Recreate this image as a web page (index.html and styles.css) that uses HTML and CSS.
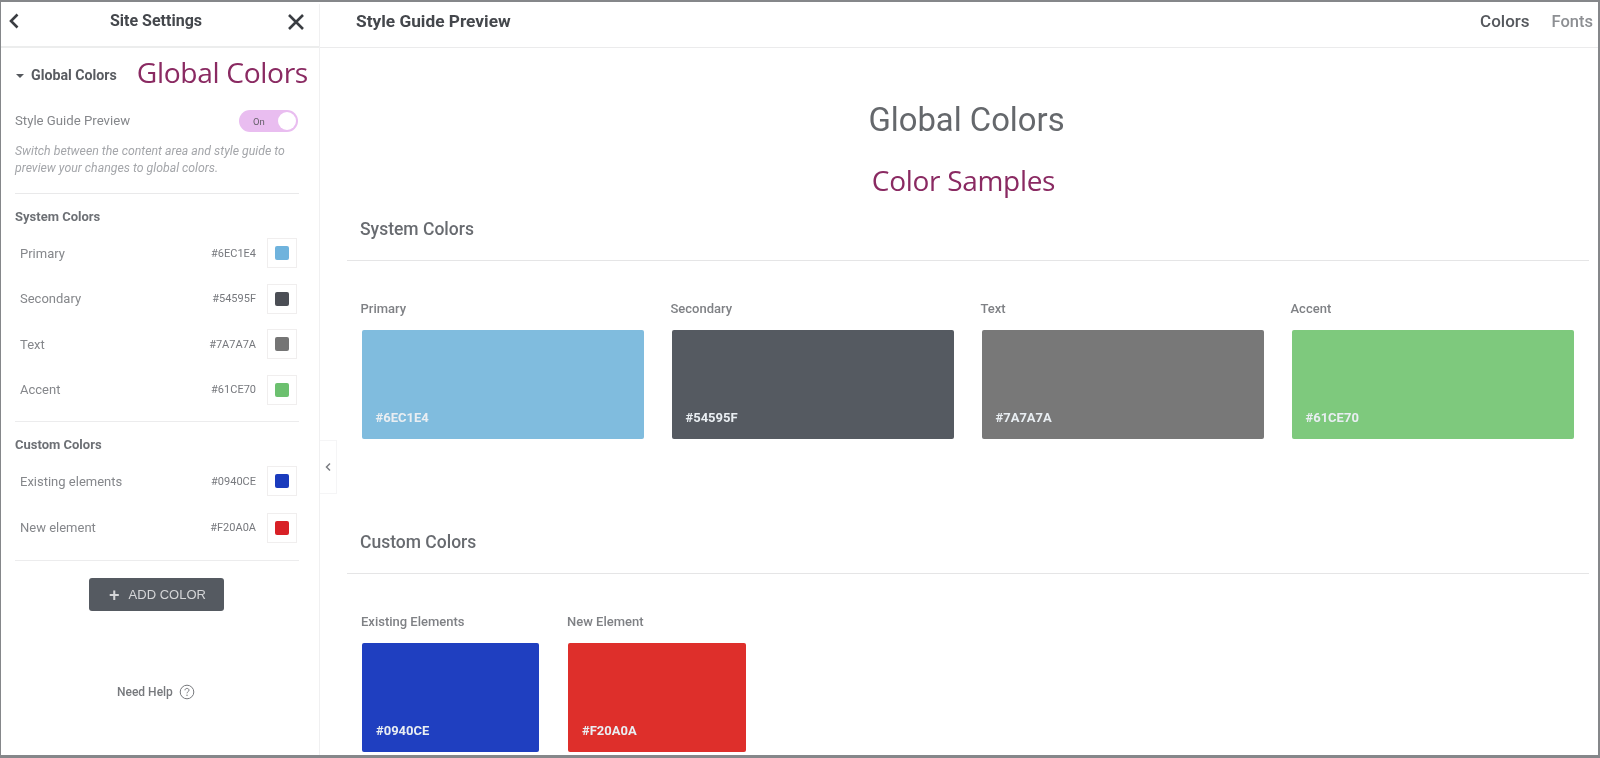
FILE: index.html
```html
<!DOCTYPE html>
<html lang="en">
<head>
<meta charset="utf-8">
<title>Site Settings - Global Colors</title>
<link rel="stylesheet" href="styles.css">
</head>
<body>
<div class="frame">
  <aside class="sidebar">
    <header class="side-head">
      <svg class="head-icon back-icon" viewBox="0 0 14 18" width="14" height="18"><path d="M10.5 2.5 4 9l6.500 6.500" fill="none" stroke="#3a3d42" stroke-width="2.600"/></svg>
      <span class="side-title">Site Settings</span>
      <svg class="head-icon" viewBox="0 0 18 18" width="18" height="18"><path d="M2 2l14 14M16 2 2 16" fill="none" stroke="#3a3d42" stroke-width="2.600"/></svg>
    </header>
    <div class="side-body">
      <div class="section-title">
        <span class="caret"></span>
        <span class="section-name">Global Colors</span>
        <span class="note note-side">Global Colors</span>
      </div>
      <div class="preview-row">
        <span class="preview-label">Style Guide Preview</span>
        <span class="toggle"><span class="toggle-text">On</span><span class="knob"></span></span>
      </div>
      <p class="hint">Switch between the content area and style guide to preview your changes to global colors.</p>
      <div class="group group-system">
        <h3 class="group-title">System Colors</h3>
        <div class="color-row"><span class="color-name">Primary</span><span class="hex">#6EC1E4</span><span class="chip"><i class="dot c-primary"></i></span></div>
        <div class="color-row"><span class="color-name">Secondary</span><span class="hex">#54595F</span><span class="chip"><i class="dot c-secondary"></i></span></div>
        <div class="color-row"><span class="color-name">Text</span><span class="hex">#7A7A7A</span><span class="chip"><i class="dot c-text"></i></span></div>
        <div class="color-row"><span class="color-name">Accent</span><span class="hex">#61CE70</span><span class="chip"><i class="dot c-accent"></i></span></div>
      </div>
      <div class="group group-custom">
        <h3 class="group-title">Custom Colors</h3>
        <div class="color-row"><span class="color-name">Existing elements</span><span class="hex">#0940CE</span><span class="chip"><i class="dot c-blue"></i></span></div>
        <div class="color-row"><span class="color-name">New element</span><span class="hex">#F20A0A</span><span class="chip"><i class="dot c-red"></i></span></div>
      </div>
      <div class="add-wrap"><button class="add-btn"><span class="plus">+</span>ADD COLOR</button></div>
      <div class="help">Need Help
        <svg viewBox="0 0 16 16" width="16" height="16"><circle cx="8" cy="8" r="6.800" fill="none" stroke="#77797d" stroke-width="1"/><path d="M6 6.300c0-1.200.9-1.900 2-1.900s2 .7 2 1.800c0 1.500-2 1.500-2 3.100" fill="none" stroke="#77797d" stroke-width="1"/><circle cx="8" cy="11.300" r=".7" fill="#77797d"/></svg>
      </div>
    </div>
    <div class="collapse">
      <svg viewBox="0 0 8 10" width="8" height="10"><path d="M6 1.500 2.500 5 6 8.500" fill="none" stroke="#7b7d82" stroke-width="1.500"/></svg>
    </div>
  </aside>
  <main class="main">
    <header class="main-head">
      <span class="main-title">Style Guide Preview</span>
      <nav class="tabs"><span class="tab tab-on">Colors</span><span class="tab">Fonts</span></nav>
    </header>
    <div class="main-body">
      <h1 class="page-title">Global Colors</h1>
      <div class="note note-main">Color Samples</div>
      <section class="panel panel-system">
        <h2 class="panel-title">System Colors</h2>
        <div class="swatches">
          <div class="swatch-col"><div class="swatch-label">Primary</div><div class="swatch c-primary-lg">#6EC1E4</div></div>
          <div class="swatch-col"><div class="swatch-label">Secondary</div><div class="swatch c-secondary-lg">#54595F</div></div>
          <div class="swatch-col"><div class="swatch-label">Text</div><div class="swatch c-text-lg">#7A7A7A</div></div>
          <div class="swatch-col"><div class="swatch-label">Accent</div><div class="swatch c-accent-lg">#61CE70</div></div>
        </div>
      </section>
      <section class="panel panel-custom">
        <h2 class="panel-title">Custom Colors</h2>
        <div class="swatches swatches-custom">
          <div class="swatch-col"><div class="swatch-label">Existing Elements</div><div class="swatch c-blue-lg">#0940CE</div></div>
          <div class="swatch-col"><div class="swatch-label">New Element</div><div class="swatch c-red-lg">#F20A0A</div></div>
        </div>
      </section>
    </div>
  </main>
</div>
</body>
</html>
```
FILE: styles.css
```css
* { box-sizing: border-box; }
html, body { margin: 0; height: 100%; background: #fff; overflow: hidden; }
body { font-family: Roboto, "Liberation Sans", sans-serif; color: #6d7075; }
.frame {
  width: 1600px; height: 758px;
  padding-top: 2px;
  border: solid #85878a;
  border-width: 2px 2px 3px 1px;
  display: flex;
  overflow: hidden;
  filter: blur(.6px);
}
.sidebar { width: 319px; flex: none; border-right: 1px solid #f0f0f1; position: relative; display: flex; flex-direction: column; }
.side-head { height: 44px; flex: none; border-bottom: 2px solid #eceded; display: flex; align-items: center; justify-content: space-between; padding: 0 14px 6px 6px; }
.back-icon { margin-top: -3px; }
.side-title { font-size: 16px; font-weight: 700; color: #44474c; margin-left: 4px; margin-top: -3px; }
.side-body { padding: 0 21px 0 14px; flex: 1; }
.section-title { display: flex; align-items: center; height: 48px; margin-top: 3px; }
.caret { width: 0; height: 0; border: solid transparent; border-width: 4px 4px 0; border-top-color: #55585d; margin: 1px 7px 0 1px; }
.section-name { font-size: 14.200px; font-weight: 700; color: #595c61; white-space: nowrap; }
.note { font-family: "Open Sans", "Noto Sans", sans-serif; color: #8a2a62; }
.note-side { font-size: 28.200px; line-height: 1; margin-left: 20px; margin-top: -5px; letter-spacing: -.35px; white-space: nowrap; }
.preview-row { display: flex; justify-content: space-between; align-items: center; height: 22px; margin-top: 10.500px; }
.preview-label { font-size: 13.200px; color: #85878b; }
.toggle { width: 59px; height: 22px; border-radius: 11px; background: #e9bdf0; display: flex; align-items: center; justify-content: space-between; padding-left: 14px; padding-right: 2px; margin-top: 1px; }
.toggle-text { font-size: 9.500px; color: #66606a; }
.knob { width: 18px; height: 18px; border-radius: 50%; background: #fff; }
.hint { margin: 11.500px 0 0; font-size: 12.300px; line-height: 17.300px; font-style: italic; color: #a4a6aa; height: 51px; border-bottom: 1px solid #e9e9ea; width: 284px; }
.group { width: 284px; }
.group-title { margin: 15px 0 13px; font-size: 13px; line-height: 16px; font-weight: 700; color: #6d7075; }
.color-row { display: flex; align-items: center; height: 30px; margin-bottom: 15.500px; padding: 0 2px 0 5px; }
.group-system { padding-bottom: 1px; }
.color-name { flex: 1; font-size: 13px; color: #85878b; }
.hex { font-size: 11px; color: #77797e; margin-right: 11px; }
.chip { width: 30px; height: 30px; border: 1px solid #f0eeee; display: flex; align-items: center; justify-content: center; }
.dot { display: block; width: 14px; height: 14px; border-radius: 2px; }
.c-primary { background: #6fb3dd; }
.c-secondary { background: #4b4e55; }
.c-text { background: #757575; }
.c-accent { background: #6cc06f; }
.c-blue { background: #1a3bbd; }
.c-red { background: #d82026; }
.group-custom { border-top: 1px solid #ececed; border-bottom: 1px solid #ececed; padding-bottom: 1px; }
.group-custom .group-title { margin-top: 15px; margin-bottom: 13px; }
.group-custom .color-row { margin-bottom: 16.500px; }
.add-wrap { width: 284px; padding-left: 74px; margin-top: 17px; }
.add-btn { width: 135px; height: 33px; border: 0; border-radius: 3px; background: #555a61; color: #d5d6d8; font: 400 13px "Liberation Sans", sans-serif; display: flex; align-items: center; justify-content: center; padding: 0 0 0 2px; }
.plus { font-size: 18px; font-weight: 700; margin-right: 9px; line-height: 1; }
.help { display: flex; align-items: center; gap: 6px; margin: 73px 0 0 102px; font-size: 12px; font-weight: 500; color: #77797d; }
.collapse { position: absolute; left: 319px; top: 436px; width: 17px; height: 54px; background: #fff; border: 1px solid #f5f5f6; border-left: 0; display: flex; align-items: center; justify-content: center; }
.main { flex: 1; min-width: 0; }
.main-head { height: 44px; border-bottom: 1px solid #ebebec; display: flex; align-items: center; justify-content: space-between; padding: 0 5px 6px 36px; }
.main-title { font-size: 17.300px; font-weight: 700; color: #44474c; margin-top: -4px; }
.tabs { display: flex; align-items: baseline; gap: 22px; margin-top: -4px; }
.tab { font-size: 16.500px; font-weight: 500; color: #8d8f93; }
.tab-on { font-size: 17px; color: #55585d; }
.main-body { padding: 0 9px 0 27px; }
.page-title { margin: 52px 0 0; height: 40px; font-size: 32.800px; line-height: 40px; font-weight: 400; text-align: center; color: #65686c; padding-right: 3px; }
.note-main { font-size: 28px; line-height: 38px; height: 38px; margin-top: 21px; margin-bottom: 19px; text-align: center; padding-right: 9px; letter-spacing: -.3px; }
.panel-title { margin: 0; padding-left: 13px; height: 42px; font-size: 17.500px; line-height: 22px; font-weight: 500; color: #686b70; }
.swatches { border-top: 1px solid #e5e5e6; padding-top: 40px; display: grid; grid-template-columns: repeat(4, 282px); column-gap: 28px; padding-left: 14.500px; }
.swatches-custom { grid-template-columns: 177px 178px; column-gap: 29px; padding-left: 15px; }
.swatch-label { font-size: 13px; line-height: 16px; font-weight: 500; color: #7f8185; margin-left: -1px; margin-bottom: 13px; }
.swatch { height: 109px; border-radius: 2px; color: #e9eef2; font-size: 13px; font-weight: 700; display: flex; align-items: flex-end; padding: 0 14px 13px; line-height: 16px; }
.panel-custom { margin-top: 92px; }
.c-primary-lg { background: #80bcde; }
.c-secondary-lg { background: #555a61; }
.c-text-lg { background: #787878; }
.c-accent-lg { background: #7ec97d; }
.c-blue-lg { background: #1f3fc0; }
.c-red-lg { background: #de2f2b; }
```
